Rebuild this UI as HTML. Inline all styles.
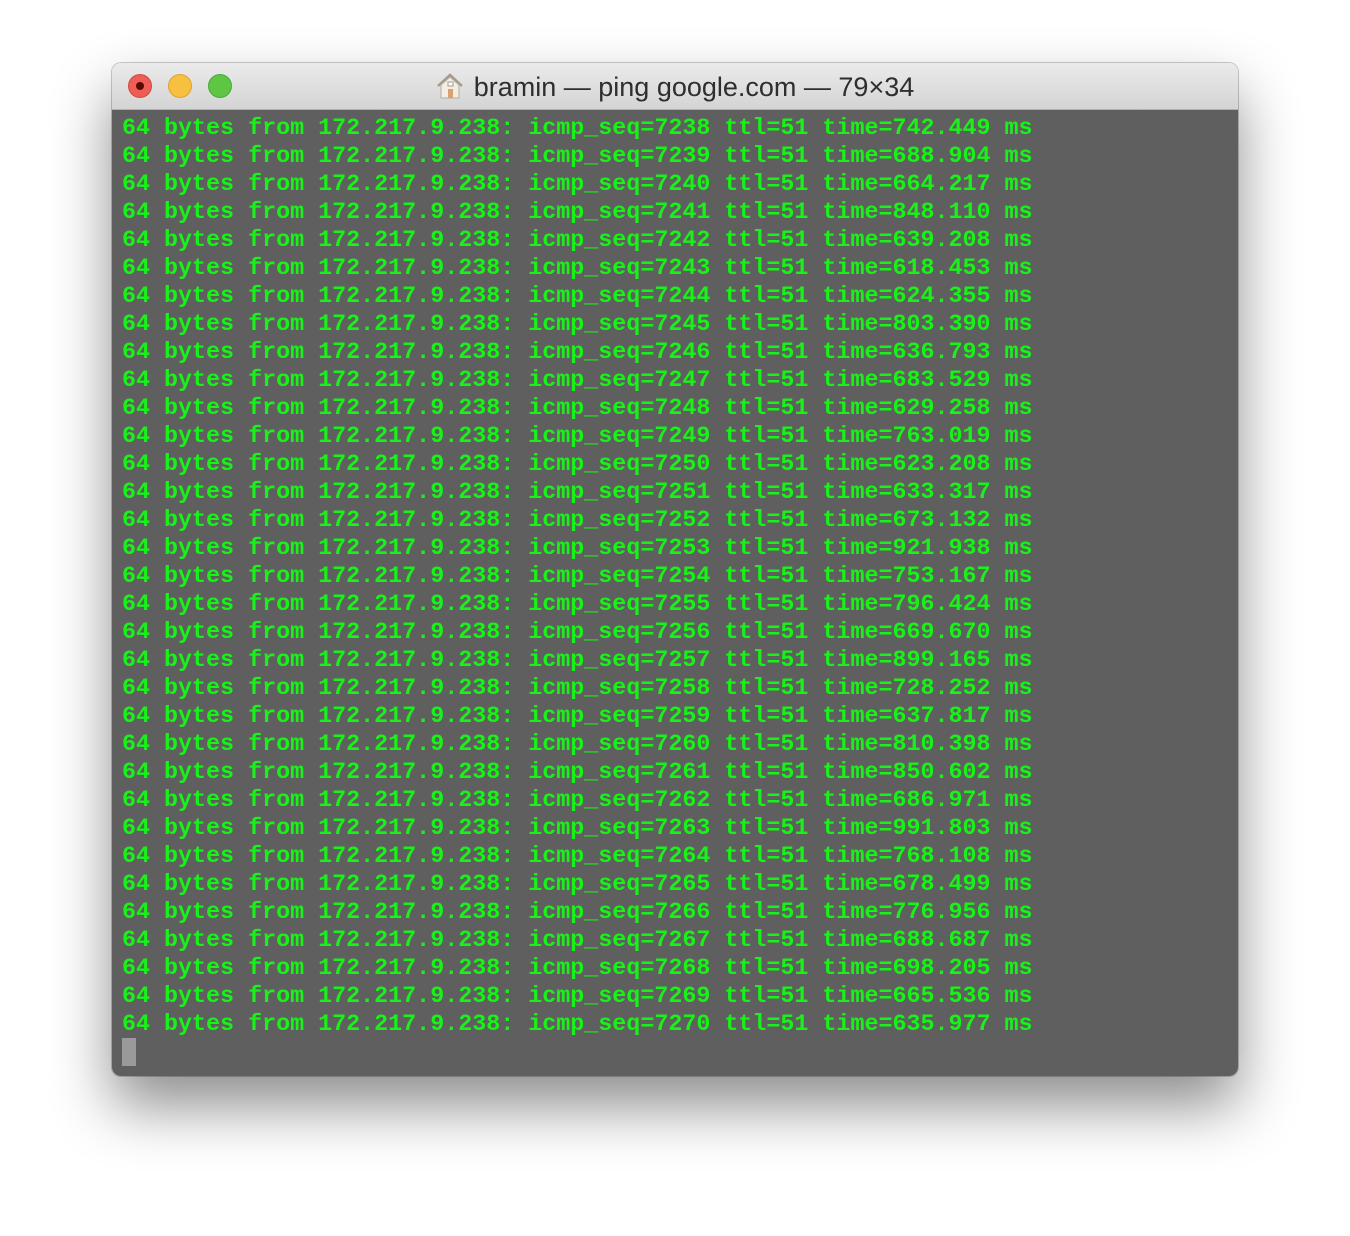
<!DOCTYPE html>
<html><head><meta charset="utf-8"><style>
html,body{margin:0;padding:0;background:#fff;width:1350px;height:1236px;overflow:hidden}
.win{position:absolute;left:112px;top:63px;width:1126px;height:1013px;border-radius:9px;overflow:hidden;
box-shadow:0 30px 60px rgba(0,0,0,0.45),0 0 0 1px rgba(0,0,0,0.2)}
.tb{position:absolute;left:0;top:0;right:0;height:46px;background:linear-gradient(#ebebeb,#d4d4d4);border-bottom:1px solid #b0b0b0}
.dot{position:absolute;top:11px;width:24px;height:24px;border-radius:50%}
.title{position:absolute;left:0;right:0;top:9px;text-align:center;font:27px "Liberation Sans",sans-serif;color:#2e2e2e}
.term{position:absolute;left:0;top:47px;right:0;bottom:0;background:#5f5f5f}
pre{margin:0;position:absolute;left:10px;top:5px;font:bold 23.35px/28px "Liberation Mono",monospace;color:#19f219}
.cur{position:absolute;left:10px;top:928px;width:14px;height:28px;background:#9a9a9a}
</style></head><body>
<div class="win">
<div class="tb">
<div class="dot" style="left:16px;background:#ee5d56;border:1px solid #d24940;width:22px;height:22px"><div style="position:absolute;left:7px;top:7px;width:8px;height:8px;border-radius:50%;background:#5a0a05"></div></div>
<div class="dot" style="left:56px;background:#f8c040;border:1px solid #dea032;width:22px;height:22px"></div>
<div class="dot" style="left:96px;background:#5ec545;border:1px solid #4aa935;width:22px;height:22px"></div>
<div class="title"><svg width="28" height="26" viewBox="0 0 28 26" style="vertical-align:-3px;margin-right:10px"><path d="M2 13 L14 2 L26 13" fill="none" stroke="#a89a8a" stroke-width="2.5"/><path d="M5 12 L14 4 L23 12 V25 H5Z" fill="#f2ede6" stroke="#b8ac9c"/><rect x="12" y="16" width="5" height="9" fill="#d9a270"/><rect x="12" y="9" width="5" height="4" fill="#fff" stroke="#a89a8a"/></svg>bramin — ping google.com — 79×34</div>
</div>
<div class="term"><pre>64 bytes from 172.217.9.238: icmp_seq=7238 ttl=51 time=742.449 ms
64 bytes from 172.217.9.238: icmp_seq=7239 ttl=51 time=688.904 ms
64 bytes from 172.217.9.238: icmp_seq=7240 ttl=51 time=664.217 ms
64 bytes from 172.217.9.238: icmp_seq=7241 ttl=51 time=848.110 ms
64 bytes from 172.217.9.238: icmp_seq=7242 ttl=51 time=639.208 ms
64 bytes from 172.217.9.238: icmp_seq=7243 ttl=51 time=618.453 ms
64 bytes from 172.217.9.238: icmp_seq=7244 ttl=51 time=624.355 ms
64 bytes from 172.217.9.238: icmp_seq=7245 ttl=51 time=803.390 ms
64 bytes from 172.217.9.238: icmp_seq=7246 ttl=51 time=636.793 ms
64 bytes from 172.217.9.238: icmp_seq=7247 ttl=51 time=683.529 ms
64 bytes from 172.217.9.238: icmp_seq=7248 ttl=51 time=629.258 ms
64 bytes from 172.217.9.238: icmp_seq=7249 ttl=51 time=763.019 ms
64 bytes from 172.217.9.238: icmp_seq=7250 ttl=51 time=623.208 ms
64 bytes from 172.217.9.238: icmp_seq=7251 ttl=51 time=633.317 ms
64 bytes from 172.217.9.238: icmp_seq=7252 ttl=51 time=673.132 ms
64 bytes from 172.217.9.238: icmp_seq=7253 ttl=51 time=921.938 ms
64 bytes from 172.217.9.238: icmp_seq=7254 ttl=51 time=753.167 ms
64 bytes from 172.217.9.238: icmp_seq=7255 ttl=51 time=796.424 ms
64 bytes from 172.217.9.238: icmp_seq=7256 ttl=51 time=669.670 ms
64 bytes from 172.217.9.238: icmp_seq=7257 ttl=51 time=899.165 ms
64 bytes from 172.217.9.238: icmp_seq=7258 ttl=51 time=728.252 ms
64 bytes from 172.217.9.238: icmp_seq=7259 ttl=51 time=637.817 ms
64 bytes from 172.217.9.238: icmp_seq=7260 ttl=51 time=810.398 ms
64 bytes from 172.217.9.238: icmp_seq=7261 ttl=51 time=850.602 ms
64 bytes from 172.217.9.238: icmp_seq=7262 ttl=51 time=686.971 ms
64 bytes from 172.217.9.238: icmp_seq=7263 ttl=51 time=991.803 ms
64 bytes from 172.217.9.238: icmp_seq=7264 ttl=51 time=768.108 ms
64 bytes from 172.217.9.238: icmp_seq=7265 ttl=51 time=678.499 ms
64 bytes from 172.217.9.238: icmp_seq=7266 ttl=51 time=776.956 ms
64 bytes from 172.217.9.238: icmp_seq=7267 ttl=51 time=688.687 ms
64 bytes from 172.217.9.238: icmp_seq=7268 ttl=51 time=698.205 ms
64 bytes from 172.217.9.238: icmp_seq=7269 ttl=51 time=665.536 ms
64 bytes from 172.217.9.238: icmp_seq=7270 ttl=51 time=635.977 ms</pre>
<div class="cur"></div></div>
</div>
</body></html>
